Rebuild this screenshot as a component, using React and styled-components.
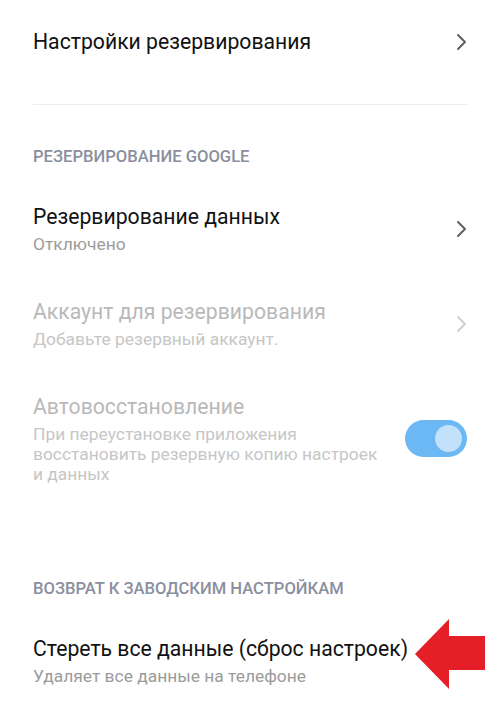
import React from 'react';
import styled, { createGlobalStyle } from 'styled-components';

const GlobalStyle = createGlobalStyle`
  html, body {
    margin: 0;
    padding: 0;
    background: #ffffff;
  }
  body {
    font-family: Roboto, "Noto Sans", "Liberation Sans", sans-serif;
    -webkit-font-smoothing: antialiased;
  }
`

const Screen = styled.main`
  width: 500px;
  min-height: 721px;
  box-sizing: border-box;
  padding: 6px 33px 0;
  background: #fff;
  overflow: hidden;
`
const Item = styled.div`
  display: flex;
  align-items: center;
  justify-content: space-between;
  padding: 22px 0;
`
const Texts = styled.div`
  display: flex;
  flex-direction: column;
  flex: 1;
  min-width: 0;
`
const Title = styled.div`
  font-size: 21.2px;
  line-height: 28px;
  color: ${p => (p.$disabled ? '#b9b9b9' : '#111111')};
  white-space: nowrap;
`
const Subtitle = styled.div`
  margin-top: 3px;
  font-size: 17.4px;
  line-height: 20px;
  color: ${p => (p.$disabled ? '#c6c6c6' : '#9b9b9b')};
  max-width: ${p => (p.$narrow ? '355px' : 'none')};
`
const Divider = styled.hr`
  margin: 26px 0 0;
  border: 0;
  height: 1px;
  background: #ececec;
`
const SectionHeader = styled.h2`
  margin: ${p => p.$top}px 0 0;
  padding-bottom: 14px;
  font-size: 16.6px;
  line-height: 20px;
  font-weight: 500;
  color: #8a8f9e;
`
const Chevron = styled.svg`
  flex: none;
  width: 11px;
  height: 18px;
  margin-left: 16px;
`
const Toggle = styled.div`
  flex: none;
  width: 62px;
  height: 37px;
  border-radius: 19px;
  background: #6cb8f4;
  display: flex;
  align-items: center;
  justify-content: flex-end;
  padding-right: 5px;
  box-sizing: border-box;
  margin-left: 16px;
`
const Knob = styled.div`
  width: 27px;
  height: 27px;
  border-radius: 50%;
  background: #c3e1fb;
`
const ArrowWrap = styled.div`
  flex: none;
  width: 72px;
  height: 70px;
  margin: -24px -20px -10px 8px;
`

const Arrow = ({ disabled }) => (
  <Chevron viewBox="0 0 11 18">
    <path
      d="M2 2 L9 9 L2 16"
      fill="none"
      stroke={disabled ? '#d0d0d0' : '#5f5f5f'}
      strokeWidth="2"
      strokeLinecap="round"
      strokeLinejoin="round"
    />
  </Chevron>
)

const RedArrow = () => (
  <ArrowWrap>
    <svg width="72" height="70" viewBox="0 0 72 70">
      <path d="M0 35 L34 0 L34 17 L70 17 L70 51 L34 51 L34 70 Z" fill="#e51f27" />
    </svg>
  </ArrowWrap>
)

export default function App() {
  return (
    <Screen>
      <GlobalStyle />
      <Item>
        <Texts>
          <Title>Настройки резервирования</Title>
        </Texts>
        <Arrow />
      </Item>
      <Divider />

      <SectionHeader $top={42}>РЕЗЕРВИРОВАНИЕ GOOGLE</SectionHeader>
      <Item>
        <Texts>
          <Title>Резервирование данных</Title>
          <Subtitle>Отключено</Subtitle>
        </Texts>
        <Arrow />
      </Item>
      <Item>
        <Texts>
          <Title $disabled>Аккаунт для резервирования</Title>
          <Subtitle $disabled>Добавьте резервный аккаунт.</Subtitle>
        </Texts>
        <Arrow disabled />
      </Item>
      <Item>
        <Texts>
          <Title $disabled>Автовосстановление</Title>
          <Subtitle $disabled $narrow>
            При переустановке приложения восстановить резервную копию настроек и данных
          </Subtitle>
        </Texts>
        <Toggle>
          <Knob />
        </Toggle>
      </Item>

      <SectionHeader $top={73}>ВОЗВРАТ К ЗАВОДСКИМ НАСТРОЙКАМ</SectionHeader>
      <Item>
        <Texts>
          <Title>Стереть все данные (сброс настроек)</Title>
          <Subtitle>Удаляет все данные на телефоне</Subtitle>
        </Texts>
        <RedArrow />
      </Item>
    </Screen>
  )
}
